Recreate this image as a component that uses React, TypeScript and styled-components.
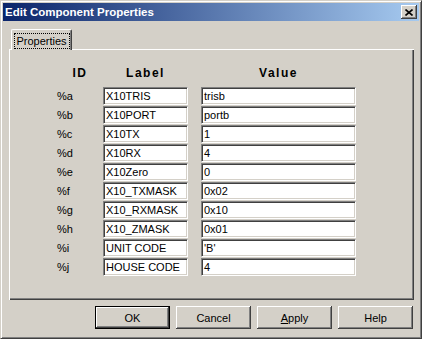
import React from "react";
import styled, { createGlobalStyle, css } from "styled-components";

const Global = createGlobalStyle`
  html, body { margin: 0; padding: 0; background: #d4d0c8; }
  body { font-family: "Liberation Sans", Arial, sans-serif; font-size: 11px; color: #000; }
  * { box-sizing: border-box; }
`;

const Window = styled.div`
  width: 422px;
  height: 339px;
  display: flex;
  flex-direction: column;
  background: #d4d0c8;
  border: 1px solid;
  border-color: #d4d0c8 #404040 #404040 #d4d0c8;
  box-shadow: inset 1px 1px #ffffff, inset -1px -1px #808080;
  padding: 2px;
`;

const TitleBar = styled.div`
  height: 18px;
  flex: none;
  display: flex;
  align-items: center;
  justify-content: space-between;
  padding: 0 2px 0 2px;
  background: linear-gradient(to right, #0a246a, #a6caf0);
`;

const Title = styled.span`
  color: #fff;
  font-weight: bold;
  font-size: 11.5px;
  line-height: 18px;
  white-space: nowrap;
`;

const CloseButton = styled.div`
  width: 16px;
  height: 14px;
  display: flex;
  align-items: center;
  justify-content: center;
  background: #d4d0c8;
  box-shadow: inset -1px -1px #404040, inset 1px 1px #ffffff, inset -2px -2px #808080;
`;

const Body = styled.div`
  flex: 1;
  display: flex;
  flex-direction: column;
  padding: 8px 5px 7px 6px;
`;

const TabStrip = styled.div`
  display: flex;
  height: 20px;
  padding-left: 2px;
`;

const Tab = styled.div`
  position: relative;
  z-index: 1;
  width: 61px;
  height: 21px;
  margin-bottom: -1px;
  display: flex;
  align-items: flex-start;
  justify-content: center;
  padding-top: 3px;
  background: #d4d0c8;
  border-top: 1px solid #fff;
  border-left: 1px solid #fff;
  border-right: 1px solid #404040;
  border-radius: 2px 2px 0 0;
  box-shadow: inset -1px 0 #808080;
`;

const FocusRect = styled.span`
  display: block;
  width: 56px;
  height: 16px;
  border: 1px dotted #000;
  text-align: center;
  line-height: 14px;
  font-size: 11px;
`;

const Panel = styled.div`
  flex: 1;
  background: #d4d0c8;
  box-shadow: inset 1px 1px #ffffff, inset -1px -1px #404040, inset -2px -2px #808080;
  padding: 17px 0 0 48px;
`;

const Grid = styled.div`
  display: grid;
  grid-template-columns: 46px 98px 155px;
  grid-template-rows: 20px repeat(10, 18px);
  row-gap: 1px;
`;

const Header = styled.div<{ $width?: number }>`
  font-weight: bold;
  font-size: 12px;
  letter-spacing: 1.5px;
  line-height: 14px;
  text-align: center;
  width: ${(p) => (p.$width ? `${p.$width}px` : "auto")};
`;

const IdCell = styled.div`
  display: flex;
  align-items: center;
  font-size: 11px;
  color: #000;
`;

const Field = styled.div<{ $width: number }>`
  width: ${(p) => p.$width}px;
  height: 18px;
  background: #fff;
  border: 1px solid;
  border-color: #808080 #ffffff #ffffff #808080;
  box-shadow: inset 1px 1px #404040, inset -1px -1px #d4d0c8;
  padding: 1px 0 0 2px;
  font-size: 11px;
  line-height: 14px;
  white-space: nowrap;
  overflow: hidden;
`;

const ButtonRow = styled.div`
  display: flex;
  justify-content: flex-end;
  gap: 6px;
  margin-top: 6px;
  padding-right: 1px;
`;

const Button = styled.div<{ $default?: boolean }>`
  width: 75px;
  height: 23px;
  display: flex;
  align-items: center;
  justify-content: center;
  font-size: 11px;
  background: #d4d0c8;
  box-shadow: inset -1px -1px #404040, inset 1px 1px #ffffff, inset -2px -2px #808080;
  ${(p) =>
    p.$default &&
    css`
      border: 1px solid #000;
    `}
`;

const Mnemonic = styled.span`
  text-decoration: underline;
`;

const rows: [string, string, string][] = [
  ["%a", "X10TRIS", "trisb"],
  ["%b", "X10PORT", "portb"],
  ["%c", "X10TX", "1"],
  ["%d", "X10RX", "4"],
  ["%e", "X10Zero", "0"],
  ["%f", "X10_TXMASK", "0x02"],
  ["%g", "X10_RXMASK", "0x10"],
  ["%h", "X10_ZMASK", "0x01"],
  ["%i", "UNIT CODE", "'B'"],
  ["%j", "HOUSE CODE", "4"],
];

export default function App() {
  return (
    <>
      <Global />
      <Window>
        <TitleBar>
          <Title>Edit Component Properties</Title>
          <CloseButton>
            <svg width="8" height="7" viewBox="0 0 8 7">
              <path d="M0.5 0.5 L7.5 6.5 M7.5 0.5 L0.5 6.5" stroke="#000" strokeWidth="1.6" fill="none" />
            </svg>
          </CloseButton>
        </TitleBar>
        <Body>
          <TabStrip>
            <Tab>
              <FocusRect>Properties</FocusRect>
            </Tab>
          </TabStrip>
          <Panel>
            <Grid>
              <Header>ID</Header>
              <Header $width={85}>Label</Header>
              <Header>Value</Header>
              {rows.map(([id, label, value]) => (
                <React.Fragment key={id}>
                  <IdCell>{id}</IdCell>
                  <Field $width={85}>{label}</Field>
                  <Field $width={155}>{value}</Field>
                </React.Fragment>
              ))}
            </Grid>
          </Panel>
          <ButtonRow>
            <Button $default>OK</Button>
            <Button>Cancel</Button>
            <Button>
              <span>
                <Mnemonic>A</Mnemonic>pply
              </span>
            </Button>
            <Button>Help</Button>
          </ButtonRow>
        </Body>
      </Window>
    </>
  );
}
